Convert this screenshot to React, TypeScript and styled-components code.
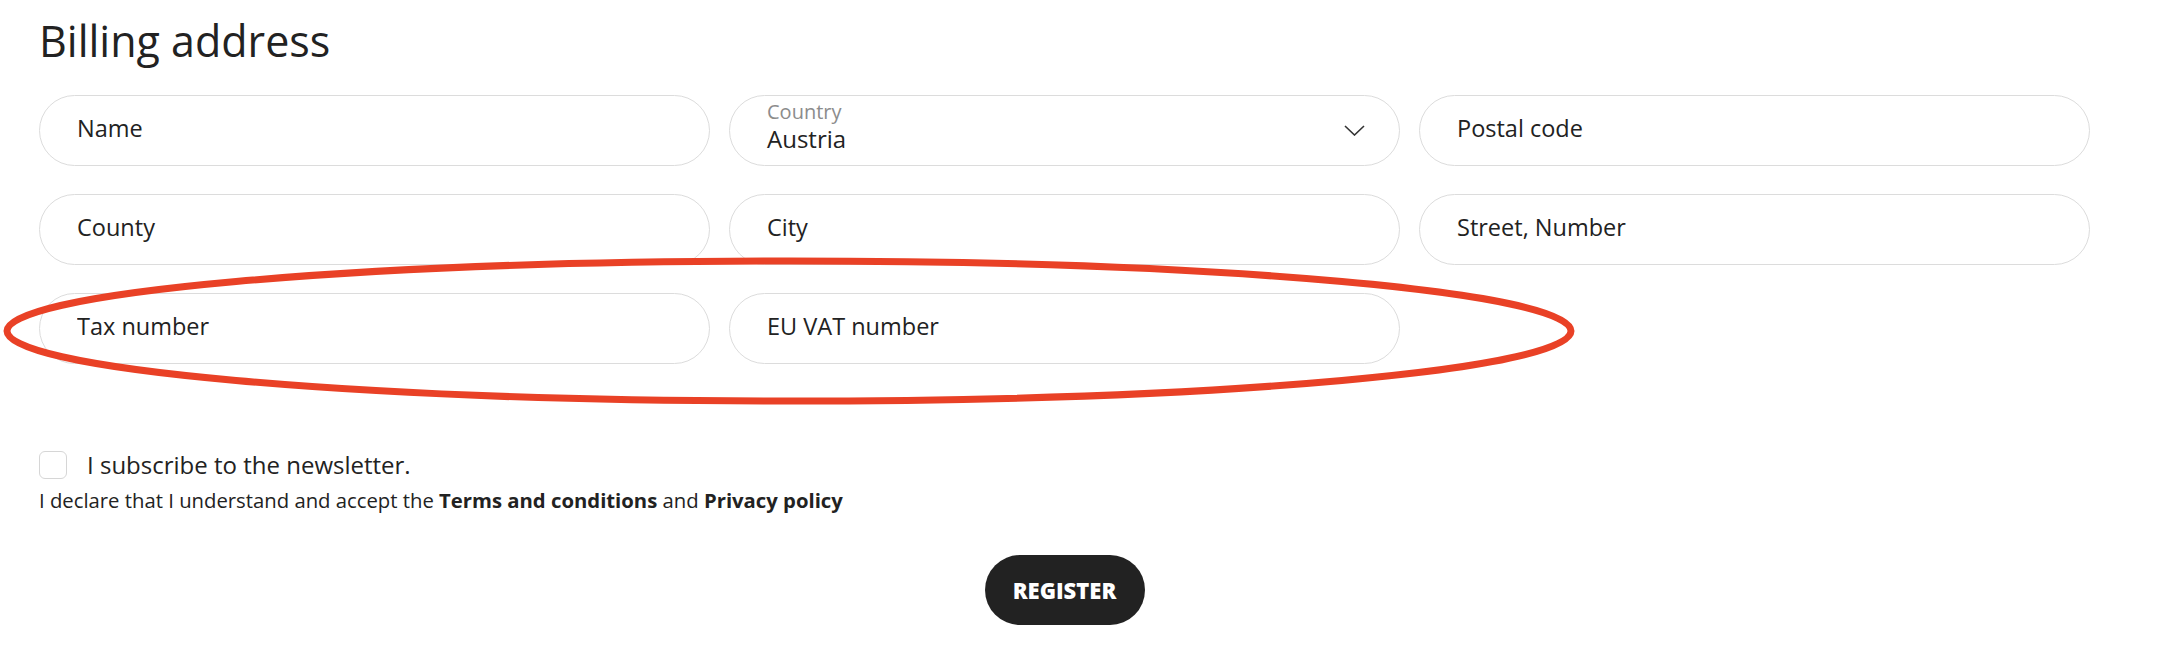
import {FC} from "react";
import styled, {createGlobalStyle} from 'styled-components';

const GlobalStyle = createGlobalStyle`
  body {
    margin: 0;
    background: #fff;
    color: #222;
    font-family: 'Open Sans', 'Noto Sans', sans-serif;
  }
`;

const Page = styled.section`
  position: relative;
  width: 2051px;
  padding: 12px 39px 40px;
`;

const Title = styled.h2`
  margin: 0 0 26px;
  font-size: 43px;
  font-weight: 400;
  line-height: 57px;
  color: #222;
`;

const FieldGrid = styled.div`
  display: grid;
  grid-template-columns: repeat(3, 1fr);
  column-gap: 19px;
  row-gap: 28px;
`;

const TextInput = styled.input`
  box-sizing: border-box;
  width: 100%;
  height: 71px;
  padding: 0 24px 5px 37px;
  border: 1px solid #dcdcdc;
  border-radius: 36px;
  background: #fff;
  font-family: inherit;
  font-size: 23.5px;
  color: #222;
  outline: none;

  &::placeholder {
    color: #222;
    opacity: 1;
  }
`;

const SelectBox = styled.div`
  box-sizing: border-box;
  height: 71px;
  padding: 0 34px 0 37px;
  border: 1px solid #dcdcdc;
  border-radius: 36px;
  display: flex;
  align-items: center;
  justify-content: space-between;
  cursor: pointer;
`;

const SelectText = styled.div`
  display: flex;
  flex-direction: column;
  margin-top: -8px;
`;

const SelectLabel = styled.span`
  font-size: 20px;
  line-height: 24px;
  color: #8c8c8c;
`;

const SelectValue = styled.span`
  font-size: 24px;
  line-height: 30px;
  color: #222;
`;

const CheckRow = styled.label`
  display: flex;
  align-items: center;
  gap: 20px;
  margin-top: 86px;
  font-size: 24px;
  line-height: 30px;
  color: #222;
`;

const Checkbox = styled.input`
  appearance: none;
  box-sizing: border-box;
  width: 28px;
  height: 28px;
  margin: 0;
  border: 1px solid #d6d6d6;
  border-radius: 6px;
  background: #fff;
`;

const Declare = styled.p`
  margin: 6px 0 0;
  font-size: 20.3px;
  line-height: normal;
  color: #222;

  & b {
    font-weight: 700;
  }
`;

const Actions = styled.div`
  display: flex;
  justify-content: center;
  margin-top: 41px;
`;

const RegisterButton = styled.button`
  width: 160px;
  height: 70px;
  border: none;
  border-radius: 35px;
  background: #222;
  color: #fff;
  font-family: inherit;
  font-size: 22px;
  font-weight: 800;
  cursor: pointer;
`;

const Marker = styled.svg`
  position: absolute;
  left: 0;
  top: 0;
  pointer-events: none;
`;

const Chevron: FC = () => (
    <svg width="21" height="11" viewBox="0 0 21 11" fill="none">
        <path d="M1 1 L10.5 10 L20 1" stroke="#333" strokeWidth="1.6"/>
    </svg>
);

const App: FC = () => {
    return (
        <Page>
            <GlobalStyle/>
            <Title>Billing address</Title>

            <FieldGrid>
                <TextInput name="name" placeholder="Name"/>
                <SelectBox>
                    <SelectText>
                        <SelectLabel>Country</SelectLabel>
                        <SelectValue>Austria</SelectValue>
                    </SelectText>
                    <Chevron/>
                </SelectBox>
                <TextInput name="postal" placeholder="Postal code"/>

                <TextInput name="county" placeholder="County"/>
                <TextInput name="city" placeholder="City"/>
                <TextInput name="street" placeholder="Street, Number"/>

                <TextInput name="tax" placeholder="Tax number"/>
                <TextInput name="vat" placeholder="EU VAT number"/>
            </FieldGrid>

            <CheckRow>
                <Checkbox type="checkbox"/>
                I subscribe to the newsletter.
            </CheckRow>
            <Declare>
                I declare that I understand and accept the <b>Terms and conditions</b> and <b>Privacy policy</b>
            </Declare>

            <Actions>
                <RegisterButton type="submit">REGISTER</RegisterButton>
            </Actions>

            <Marker width="1600" height="420" viewBox="0 0 1600 420">
                <ellipse cx="789" cy="331" rx="782" ry="70" fill="none" stroke="#E94126" strokeWidth="7"/>
            </Marker>
        </Page>
    )
}

export default App;
